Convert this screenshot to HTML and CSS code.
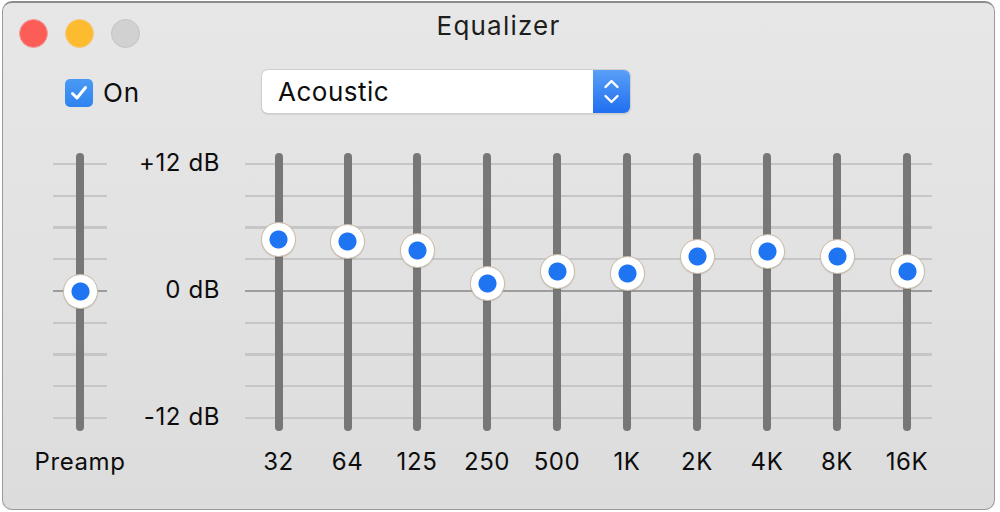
FILE: index.html
```html
<!DOCTYPE html>
<html lang="en">
<head>
<meta charset="utf-8">
<title>Equalizer</title>
<link rel="stylesheet" href="styles.css">
</head>
<body>
<div class="window">
  <div class="titlebar">
    <div class="lights">
      <span class="light red"></span>
      <span class="light yellow"></span>
      <span class="light gray"></span>
    </div>
    <div class="title">Equalizer</div>
    <div></div>
  </div>

  <div class="controls">
    <label class="on-group">
      <span class="checkbox">
        <svg viewBox="0 0 28 28" width="28" height="28"><polyline points="7.5,14.5 12,19 20.5,8.5" fill="none" stroke="#fff" stroke-width="3" stroke-linecap="round" stroke-linejoin="round"/></svg>
      </span>
      <span class="on-text">On</span>
    </label>
    <div class="select">
      <span class="select-value">Acoustic</span>
      <span class="select-btn">
        <svg viewBox="0 0 37 42" width="37" height="42"><polyline points="12.5,17 18.5,11 24.5,17" fill="none" stroke="#fff" stroke-width="2.4" stroke-linecap="round" stroke-linejoin="round"/><polyline points="12.5,26 18.5,32 24.5,26" fill="none" stroke="#fff" stroke-width="2.4" stroke-linecap="round" stroke-linejoin="round"/></svg>
      </span>
    </div>
  </div>

  <div class="sliders">
    <div class="col preamp">
      <div class="scale ticks">
        <div class="track"></div>
        <span class="knob" style="top:138px"></span>
      </div>
      <div class="label">Preamp</div>
    </div>

    <div class="db-labels">
      <span>+12 dB</span>
      <span>0 dB</span>
      <span>-12 dB</span>
    </div>

    <div class="bands">
      <div class="col"><div class="scale"><div class="track"></div><span class="knob" style="top:86px"></span></div><div class="label">32</div></div>
      <div class="col"><div class="scale"><div class="track"></div><span class="knob" style="top:88px"></span></div><div class="label">64</div></div>
      <div class="col"><div class="scale"><div class="track"></div><span class="knob" style="top:97px"></span></div><div class="label">125</div></div>
      <div class="col"><div class="scale"><div class="track"></div><span class="knob" style="top:130px"></span></div><div class="label">250</div></div>
      <div class="col"><div class="scale"><div class="track"></div><span class="knob" style="top:118px"></span></div><div class="label">500</div></div>
      <div class="col"><div class="scale"><div class="track"></div><span class="knob" style="top:120px"></span></div><div class="label">1K</div></div>
      <div class="col"><div class="scale"><div class="track"></div><span class="knob" style="top:103px"></span></div><div class="label">2K</div></div>
      <div class="col"><div class="scale"><div class="track"></div><span class="knob" style="top:98px"></span></div><div class="label">4K</div></div>
      <div class="col"><div class="scale"><div class="track"></div><span class="knob" style="top:103px"></span></div><div class="label">8K</div></div>
      <div class="col"><div class="scale"><div class="track"></div><span class="knob" style="top:118px"></span></div><div class="label">16K</div></div>
    </div>
  </div>
</div>
</body>
</html>
```

FILE: styles.css
```css
* { box-sizing: border-box; }

html, body {
  margin: 0;
  padding: 0;
  background: #ffffff;
}

body {
  width: 1000px;
  height: 512px;
  overflow: hidden;
  font-family: Inter, "Liberation Sans", Arial, sans-serif;
  color: #111;
}

.window {
  margin: 1px 5px 0 2px;
  height: 509px;
  border: 1px solid #9a9a9a;
  border-top: 2px solid #8c8c8c;
  border-radius: 10px;
  background: linear-gradient(to bottom, #e7e7e7 0%, #e2e2e2 50%, #dcdcdc 100%);
  overflow: hidden;
}

/* title bar */
.titlebar {
  height: 58px;
  display: grid;
  grid-template-columns: 1fr auto 1fr;
  align-items: center;
}

.lights {
  display: flex;
  gap: 17px;
  padding-left: 16px;
  padding-top: 2px;
}

.light {
  width: 29px;
  height: 29px;
  border-radius: 50%;
  display: block;
}
.light.red { background: #fc5d56; border: 1px solid #f0a0a0; }
.light.yellow { background: #fdbb2f; border: 1px solid #f4c97e; }
.light.gray { background: #d1d1d1; border: 1px solid #c4c4c4; }

.title {
  font-size: 26px;
  color: #1e1e1e;
  margin-top: -14px;
  letter-spacing: 1.2px;
}

/* controls */
.controls {
  display: flex;
  align-items: center;
  margin-top: 8px;
  padding-left: 62px;
  height: 44px;
}

.on-group {
  width: 197px;
  display: flex;
  align-items: center;
  gap: 10px;
  padding-top: 3px;
}

.checkbox {
  width: 28px;
  height: 28px;
  border-radius: 5px;
  background: linear-gradient(to bottom, #4a9af5, #2f83ee);
  display: block;
}
.checkbox svg { display: block; }

.on-text {
  font-size: 26px;
  letter-spacing: 0.8px;
  color: #0d0d0d;
}

.select {
  width: 368px;
  height: 43px;
  display: flex;
  align-items: stretch;
  background: #ffffff;
  border-radius: 6px;
  box-shadow: 0 0 0 1px #cfcfcf, 0 1px 2px rgba(0,0,0,0.25);
  overflow: hidden;
}

.select-value {
  flex: 1;
  display: flex;
  align-items: center;
  padding-left: 16px;
  font-size: 26px;
  letter-spacing: 0.5px;
  color: #0d0d0d;
}

.select-btn {
  width: 37px;
  background: linear-gradient(to bottom, #5a9ff7, #1f6ff0);
  display: flex;
  align-items: center;
  justify-content: center;
}
.select-btn svg { display: block; }

/* sliders */
.sliders {
  display: flex;
  margin-top: 40px;
  padding-left: 50px;
}

.col {
  display: flex;
  flex-direction: column;
  align-items: center;
}

.scale {
  position: relative;
  height: 278px;
  width: 100%;
  display: flex;
  justify-content: center;
}

.preamp { width: 54px; }

.ticks {
  background:
    linear-gradient(#9d9d9d, #9d9d9d) 0 137px / 100% 2px no-repeat,
    repeating-linear-gradient(to bottom, #c6c6c6 0 2px, transparent 2px 31.75px) 0 10px / 100% 256px no-repeat;
}

.track {
  width: 8px;
  height: 100%;
  border-radius: 4px;
  background: #777777;
}

.knob {
  position: absolute;
  left: 50%;
  width: 33px;
  height: 33px;
  margin-left: -16.5px;
  margin-top: -16.5px;
  border-radius: 50%;
  background: radial-gradient(circle, #1f74f2 0 8.5px, #ffffff 9.5px);
  box-shadow: 0 0 0 1px #cdbca8, 0 1px 2px rgba(0,0,0,0.3);
}

.label {
  margin-top: 17px;
  font-size: 24px;
  letter-spacing: 0.6px;
  line-height: 28px;
  color: #0d0d0d;
  white-space: nowrap;
}

.db-labels {
  width: 113px;
  height: 282px;
  margin-top: -4px;
  display: flex;
  flex-direction: column;
  justify-content: space-between;
  align-items: flex-end;
  font-size: 24px;
  letter-spacing: 0.6px;
  line-height: 28px;
  color: #0d0d0d;
}

.bands {
  width: 699px;
  display: grid;
  grid-template-columns: 69px 69px 70px 70px 70px 70px 70px 70px 70px 70px;
  margin-left: 24px;
  background:
    linear-gradient(#9d9d9d, #9d9d9d) 1px 137px / 687px 2px no-repeat,
    repeating-linear-gradient(to bottom, #c6c6c6 0 2px, transparent 2px 31.75px) 1px 10px / 687px 256px no-repeat;
}
```
